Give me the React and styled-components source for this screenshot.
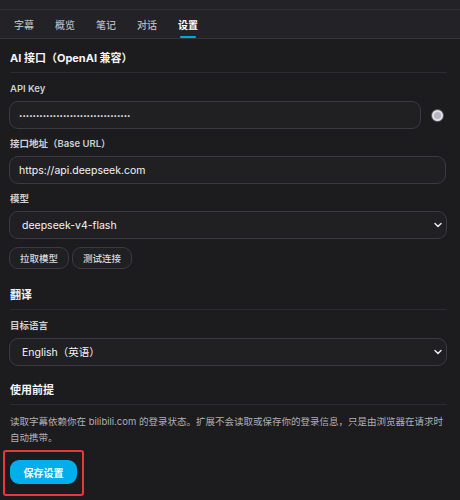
import React, { useState } from 'react';
import styled, { createGlobalStyle } from 'styled-components';

const GlobalStyle = createGlobalStyle`
  html, body {
    margin: 0;
    padding: 0;
    background: #1c1c1f;
  }
  body {
    font-family: Inter, "Noto Sans CJK SC", sans-serif;
    color: #e8e8ea;
  }
`;

const Panel = styled.div`
  width: 460px;
  min-height: 500px;
  background: #1c1c1f;
`;

const TopStrip = styled.div`
  height: 9px;
  background: #232327;
  border-bottom: 1px solid #303034;
`;

const TabBar = styled.nav`
  display: flex;
  gap: 21px;
  height: 28px;
  padding: 0 14px;
  background: #232327;
  border-bottom: 1px solid #36363a;
`;

const Tab = styled.button`
  position: relative;
  padding: 0;
  border: none;
  background: none;
  font-family: inherit;
  font-size: 10px;
  font-weight: ${p => (p.$active ? 700 : 500)};
  color: ${p => (p.$active ? '#ffffff' : '#b8b8bc')};
  cursor: pointer;

  &::after {
    content: '';
    position: absolute;
    left: 2px;
    right: 2px;
    bottom: 0;
    height: 2px;
    border-radius: 1px;
    background: ${p => (p.$active ? '#00a8e0' : 'transparent')};
  }
`;

const Body = styled.div`
  padding: 0 13px 0 10px;
`;

const Section = styled.section`
  margin-top: ${p => p.$top}px;
`;

const SectionTitle = styled.h2`
  margin: 0;
  padding: 0 0 6px;
  font-size: 11px;
  line-height: 16px;
  font-weight: 700;
  color: #f4f4f6;
  border-bottom: 1px solid #2c2c30;
`;

const Field = styled.div`
  display: flex;
  flex-direction: column;
  gap: 5px;
  margin-top: ${p => p.$top || 8}px;
`;

const Label = styled.label`
  font-size: 9.5px;
  line-height: 14px;
  font-weight: 600;
  color: #cdcdd1;
`;

const Row = styled.div`
  display: flex;
  align-items: center;
  gap: 11px;
`;

const TextInput = styled.input`
  box-sizing: border-box;
  flex: 1 1 auto;
  width: 100%;
  height: 28px;
  margin-left: -1px;
  padding: 0 9px;
  border: 1px solid #3a3a3f;
  border-radius: 9px;
  background: #202023;
  font-family: inherit;
  font-size: ${p => (p.type === 'password' ? '6px' : '10.5px')};
  color: #f4f4f6;
  outline: none;
`;

const SelectWrap = styled.div`
  position: relative;
  margin-left: -1px;
`;

const Select = styled.select`
  box-sizing: border-box;
  width: 100%;
  height: 28px;
  padding: 0 10px 0 12px;
  border: 1px solid #3a3a3f;
  border-radius: 9px;
  background: #202023;
  font-family: inherit;
  font-size: 10.5px;
  color: #f4f4f6;
  appearance: none;
  outline: none;
`;

const Chevron = styled.svg`
  position: absolute;
  right: 4px;
  top: 10px;
  pointer-events: none;
`;

/* round show-key toggle next to the key field */
const RevealToggle = styled.span`
  box-sizing: border-box;
  flex: none;
  width: 11px;
  height: 11px;
  margin-right: 4px;
  border-radius: 50%;
  border: 2px solid #e2e2e6;
  background: #b4b8c2;
  box-shadow: 0 0 0 1px #5a5a60;
`;

const ButtonRow = styled.div`
  display: flex;
  gap: 3px;
  margin: 8px 0 0 -1px;
`;

const GhostButton = styled.button`
  height: 22px;
  padding: 0 10px;
  border: 1px solid #3a3a3f;
  border-radius: 9px;
  background: #202023;
  font-family: inherit;
  font-size: 9.5px;
  font-weight: 500;
  color: #d6d6da;
  cursor: pointer;
`;

const Note = styled.p`
  margin: 9px 0 0;
  font-size: 9.5px;
  line-height: 16px;
  color: #b0b0b4;
`;

const Highlight = styled.div`
  display: inline-flex;
  margin: 4px 0 0 -7px;
  padding: 8px 5px 10px 5px;
  border: 2px solid #e8383b;
  border-radius: 3px;
`;

const SaveButton = styled.button`
  width: 67px;
  height: 24px;
  border: none;
  border-radius: 9px;
  background: #00aeec;
  font-family: inherit;
  font-size: 10px;
  font-weight: 700;
  color: #ffffff;
  cursor: pointer;
`;

const tabs = ['字幕', '概览', '笔记', '对话', '设置'];

const ChevronIcon = () => (
  <Chevron width="10" height="8" viewBox="0 0 10 8">
    <path d="M2 2.5 L5 5.5 L8 2.5" fill="none" stroke="#e8e8ea" strokeWidth="1.5" strokeLinecap="round" strokeLinejoin="round" />
  </Chevron>
);

export default function App() {
  const [active, setActive] = useState('设置');

  return (
    <Panel>
      <GlobalStyle />
      <TopStrip />
      <TabBar>
        {tabs.map(t => (
          <Tab key={t} $active={t === active} onClick={() => setActive(t)}>
            {t}
          </Tab>
        ))}
      </TabBar>

      <Body>
        <Section $top={11}>
          <SectionTitle>AI 接口（OpenAI 兼容）</SectionTitle>
          <Field $top={9}>
            <Label>API Key</Label>
            <Row>
              <TextInput type="password" defaultValue="sk-0123456789abcdef0123456789abcd" />
              <RevealToggle />
            </Row>
          </Field>
          <Field>
            <Label>接口地址（Base URL）</Label>
            <TextInput type="text" defaultValue="https://api.deepseek.com" />
          </Field>
          <Field>
            <Label>模型</Label>
            <SelectWrap>
              <Select defaultValue="deepseek-v4-flash">
                <option>deepseek-v4-flash</option>
                <option>deepseek-v4-pro</option>
              </Select>
              <ChevronIcon />
            </SelectWrap>
          </Field>
          <ButtonRow>
            <GhostButton>拉取模型</GhostButton>
            <GhostButton>测试连接</GhostButton>
          </ButtonRow>
        </Section>

        <Section $top={18}>
          <SectionTitle>翻译</SectionTitle>
          <Field $top={9}>
            <Label>目标语言</Label>
            <SelectWrap>
              <Select defaultValue="en">
                <option value="en">English（英语）</option>
                <option value="ja">日本語（日语）</option>
              </Select>
              <ChevronIcon />
            </SelectWrap>
          </Field>
        </Section>

        <Section $top={16}>
          <SectionTitle>使用前提</SectionTitle>
          <Note>
            读取字幕依赖你在 bilibili.com 的登录状态。扩展不会读取或保存你的登录信息，只是由浏览器在请求时自动携带。
          </Note>
          <Highlight>
            <SaveButton>保存设置</SaveButton>
          </Highlight>
        </Section>
      </Body>
    </Panel>
  );
}
